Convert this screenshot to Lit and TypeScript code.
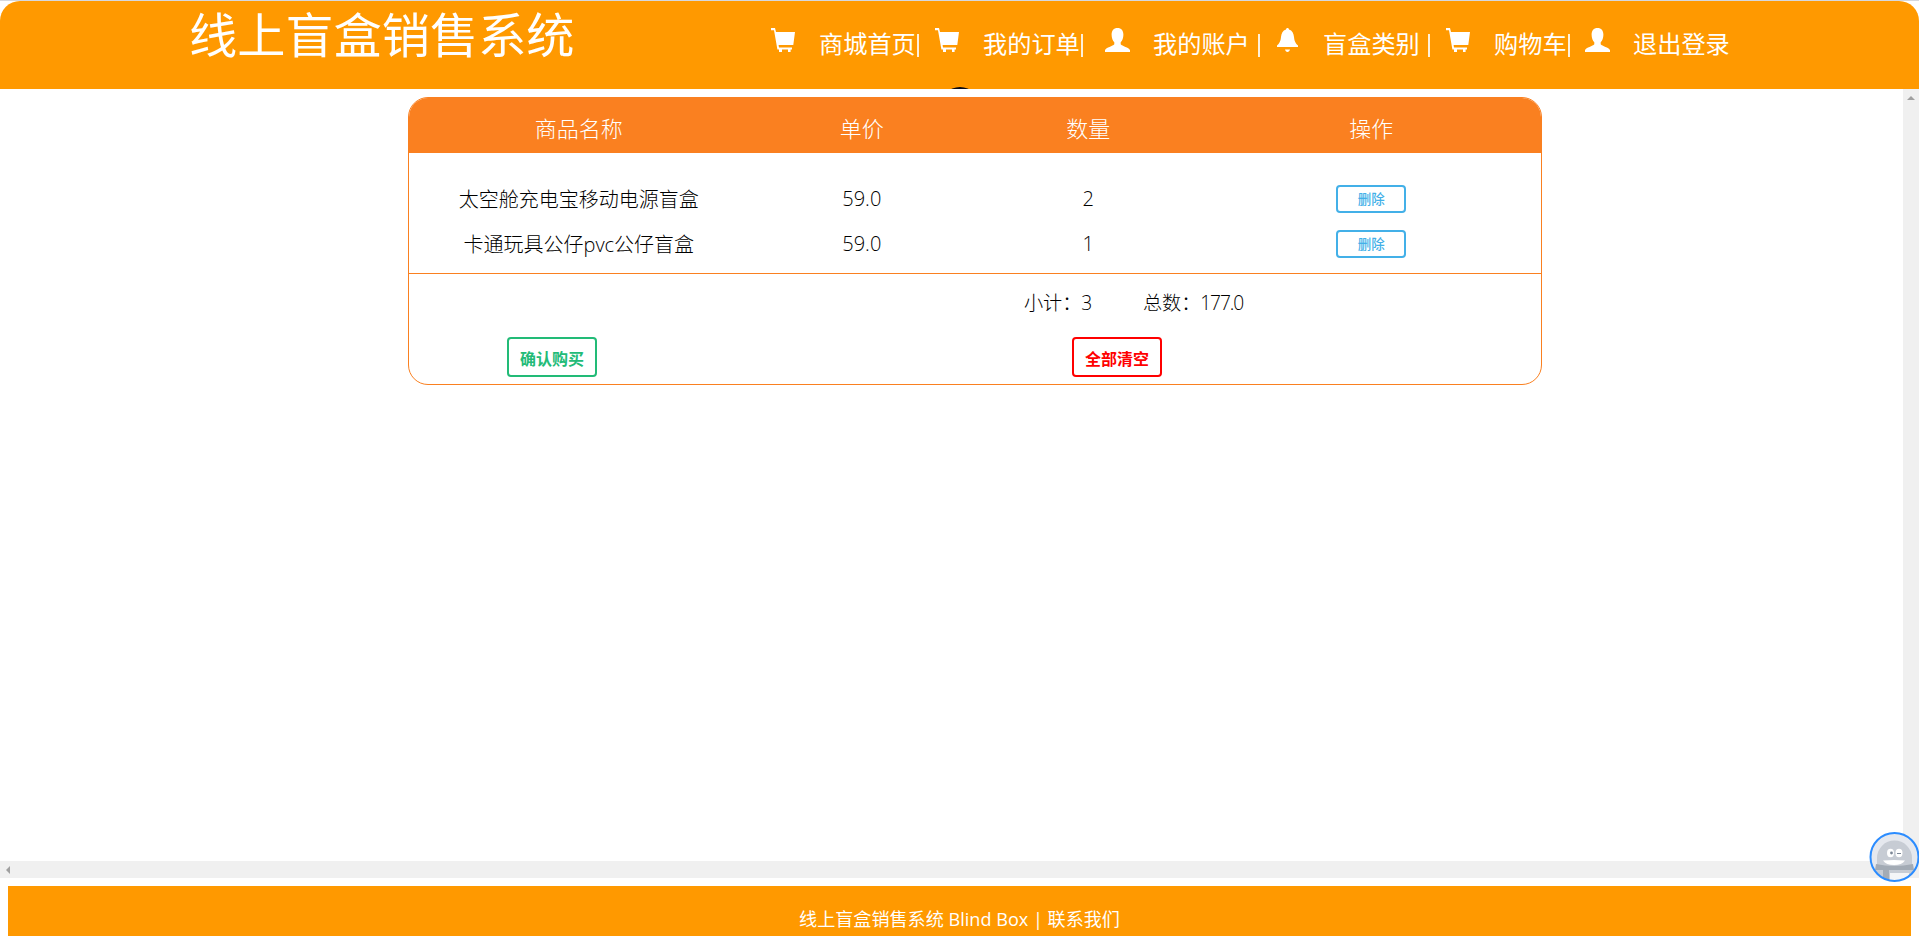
import { LitElement, html, css, svg } from "lit";
import { customElement, property } from "lit/decorators.js";

const GLYPHS: Record<string, unknown> = {
  cart: svg`<path d="M0 0H4L5 4H24L22.3 17H7.6L8 19.6H21V21.4H19.6V24H17V21.400H11V24H8V21.400H6.400L3 2.300H0Z"/>`,
  user: svg`<path d="M12.5 0C16.3 0 18.4 2.7 18.4 6.7C18.4 10 17.2 12.8 15.7 14.2V16.2C17 18 24 19.5 25 22V24H0V22C1 19.5 8 18 9.3 16.2V14.2C7.800 12.8 6.600 10 6.600 6.700C6.600 2.700 8.700 0 12.500 0Z"/>`,
  bell: svg`<path d="M9 1.600C9 .6 9.700 0 10.500 0S12 .6 12 1.600C15.300 2.600 16.600 5.500 17 9C17.400 13.500 18.600 15.300 21 17.500V19H0V17.500C2.400 15.300 3.600 13.500 4 9C4.400 5.500 5.700 2.600 9 1.600ZM8 21.600H13C12.600 23 11.700 24 10.500 24S8.400 23 8 21.600Z"/>`,
};
const WIDTHS: Record<string, number> = { cart: 24, user: 25, bell: 21 };

@customElement("nav-item")
class NavItem extends LitElement {
  @property() icon = "cart";
  @property() label = "";
  @property() divider = "";
  static styles = css`
    :host { display: flex; align-items: flex-start; white-space: pre; }
    svg { display: block; height: 24px; fill: #fff; margin-right: 23px; }
    .cart { margin-right: 24px; }
    .bell { margin-right: 25px; }
    .label { font-size: 24.2px; line-height: 32px; }
    .bar { width: 2px; height: 23px; margin-top: 6px; background: #fff; opacity: 0.85; }
    .tight { margin-left: 1px; }
    .loose { margin-left: 8px; }
  `;
  render() {
    const w = WIDTHS[this.icon];
    return html`<svg class=${this.icon} width=${w} height="24" viewBox="0 0 ${w} 24">${GLYPHS[this.icon]}</svg><span class="label">${this.label}</span>${this.divider ? html`<span class="bar ${this.divider}"></span>` : ""}`;
  }
}

@customElement("app-root")
class AppRoot extends LitElement {
  items = [
    { name: "太空舱充电宝移动电源盲盒", price: "59.0", count: 2 },
    { name: "卡通玩具公仔pvc公仔盲盒", price: "59.0", count: 1 },
  ];
  static styles = css`
    :host { display: flex; flex-direction: column; position: relative; width: 1919px; height: 936px; overflow: hidden; background: #fff;
      font-family: "Open Sans", "Noto Sans CJK SC", sans-serif; color: #000; box-sizing: border-box; border-top: 1px solid #d6d8de; }
    * { box-sizing: border-box; }
    header { display: flex; position: relative; flex: none; height: 88px; background: #ff9900; color: #fff; border-radius: 20px 20px 0 0; padding-left: 189px; overflow: hidden; }
    h1 { margin: 0; width: 582px; font-size: 48.2px; font-weight: 400; line-height: 66px; white-space: nowrap; }
    nav { display: flex; padding-top: 27px; }
    .n1 { width: 164px; } .n2 { width: 170px; } .n3 { width: 172px; } .n4 { width: 169px; } .n5 { width: 139px; }
    .dot { position: absolute; left: 940px; top: 86px; width: 40px; height: 40px; border-radius: 50%; background: #0a0a14; }
    .view { display: grid; grid-template-columns: 1fr 16px; grid-template-rows: 1fr 17px; height: 789px; flex: none; }
    .content { padding: 8px 0 0 408px; }
    .vbar { grid-row: 1 / 3; grid-column: 2; background: #f0f0f0; display: flex; justify-content: center; padding-top: 7px; }
    .hbar { background: #f0f0f0; padding: 5px 0 0 6px; }
    .vbar svg, .hbar svg { display: block; fill: #a0a0a0; }
    .card { width: 1134px; height: 288px; border: 1px solid #fa8020; border-radius: 20px; overflow: hidden; }
    .row { display: grid; grid-template-columns: 30% 20% 20% 30%; text-align: center; align-items: center; justify-items: center; height: 45px; font-size: 20px; font-weight: 300; }
    .head { height: 55px; padding-top: 2px; background: #fa8020; color: #fff; font-size: 22px; }
    .rows { height: 121px; padding-top: 23px; border-bottom: 1px solid #fa8020; }
    button { font: 500 13.5px/20px "Noto Sans CJK SC", sans-serif; background: #fff; border: 2px solid #43b0e8; color: #43b0e8; border-radius: 4px; padding: 0 0 1px; width: 70px; height: 28px; }
    .sum { display: flex; padding-left: 615px; height: 57px; line-height: 57px; font-size: 19.2px; font-weight: 300; }
    .sum span { width: 119px; white-space: nowrap; letter-spacing: -0.1px; }
    .sum .num { font-weight: 300; letter-spacing: -1.1px; }
    .acts { display: flex; padding: 6px 0 0 98px; gap: 475px; }
    .acts button { width: 90px; height: 40px; font-size: 16px; font-weight: 600; padding: 2px 0 0; }
    .acts .buy { border-color: #22bb77; color: #22bb77; }
    .acts .clear { border-color: #ff0000; color: #ff0000; }
    footer { margin: 8px 8px 0; flex: 1; background: #ff9900; color: #fff; text-align: center; font-size: 18.1px; line-height: 66px; }
    .bot { position: absolute; left: 1869px; top: 830px; }
  `;
  render() {
    return html`
      <header>
        <h1>线上盲盒销售系统</h1>
        <nav>
          <nav-item class="n1" icon="cart" label="商城首页" divider="tight"></nav-item>
          <nav-item class="n2" icon="cart" label="我的订单" divider="tight"></nav-item>
          <nav-item class="n3" icon="user" label="我的账户" divider="loose"></nav-item>
          <nav-item class="n4" icon="bell" label="盲盒类别" divider="loose"></nav-item>
          <nav-item class="n5" icon="cart" label="购物车" divider="tight"></nav-item>
          <nav-item icon="user" label="退出登录"></nav-item>
        </nav>
        <span class="dot"></span>
      </header>
      <div class="view">
        <div class="content">
          <div class="card">
            <div class="row head"><span>商品名称</span><span>单价</span><span>数量</span><span>操作</span></div>
            <div class="rows">
              ${this.items.map((i) => html`<div class="row"><span>${i.name}</span><span>${i.price}</span><span>${i.count}</span><button>删除</button></div>`)}
            </div>
            <div class="sum"><span>小计：3</span><span>总数：<b class="num">177.0</b></span></div>
            <div class="acts"><button class="buy">确认购买</button><button class="clear">全部清空</button></div>
          </div>
        </div>
        <div class="vbar"><svg width="8" height="4" viewBox="0 0 8 4"><path d="M0 4L4 0L8 4Z"/></svg></div>
        <div class="hbar"><svg width="4" height="8" viewBox="0 0 4 8"><path d="M4 0L0 4L4 8Z"/></svg></div>
      </div>
      <footer>线上盲盒销售系统 Blind Box | 联系我们</footer>
      <svg class="bot" width="52" height="52" viewBox="0 0 52 52">
        <defs><clipPath id="c"><circle cx="25.500" cy="26" r="24"/></clipPath></defs>
        <circle cx="25.500" cy="26" r="24" fill="#e5e8ee"/>
        <g clip-path="url(#c)">
          <path d="M8 36V27A17 17 0 0 1 43 27V36Z" fill="#c7ccd4"/>
          <path d="M7 33Q25 37 44 33L45 39Q25 42 6 39Z" fill="#a3abb5"/>
          <path d="M6 39H45V52H6Z" fill="#c7ccd4"/><path d="M14 39H20V52H14Z" fill="#a3abb5"/><path d="M21 42H40V52H21Z" fill="#f4f5f7"/>
          <ellipse cx="21.500" cy="22" rx="3.500" ry="4.200" fill="#fff"/><ellipse cx="30" cy="22" rx="3.500" ry="4.200" fill="#fff"/>
          <circle cx="22.500" cy="22" r="1.400" fill="#7c8796"/><path d="M28 22.500H32" stroke="#7c8796" stroke-width="1.200"/>
          <path d="M14 29.500Q25 28.500 36 29.500Q33 34 25 34T14 29.500Z" fill="#fff"/>
        </g>
        <circle cx="25.500" cy="26" r="24" fill="none" stroke="#2b8cff" stroke-width="2"/>
      </svg>`;
  }
}
